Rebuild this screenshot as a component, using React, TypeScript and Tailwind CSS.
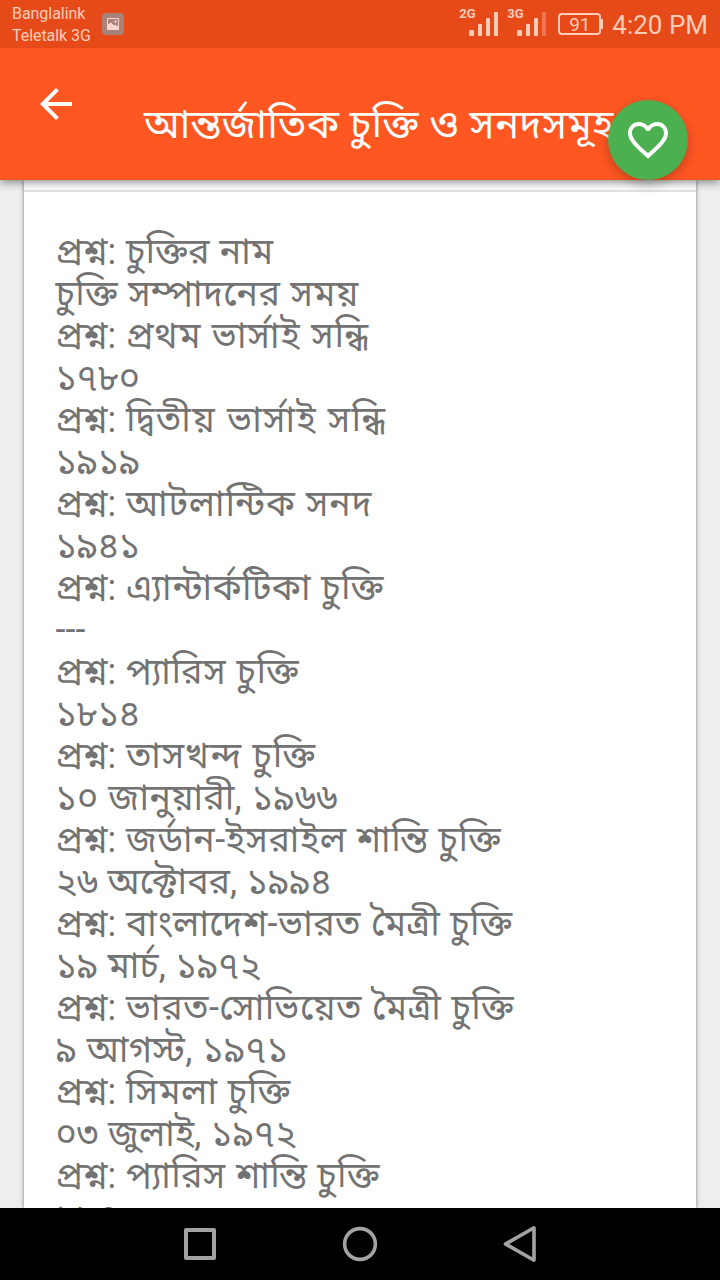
const lines = [
  { q: true, text: "চুক্তির নাম", tracking: "tracking-[0.2px]" },
  { text: "চুক্তি সম্পাদনের সময়", tracking: "tracking-[0.45px]" },
  { q: true, text: "প্রথম ভার্সাই সন্ধি", tracking: "tracking-[0.9px]" },
  { text: "১৭৮০", tracking: "tracking-[-0.2px]" },
  { q: true, text: "দ্বিতীয় ভার্সাই সন্ধি", tracking: "tracking-[1.3px]" },
  { text: "১৯১৯", tracking: "tracking-[-0.2px]" },
  { q: true, text: "আটলান্টিক সনদ", tracking: "tracking-[0.75px]" },
  { text: "১৯৪১", tracking: "tracking-[-0.2px]" },
  { q: true, text: "এ্যান্টার্কটিকা চুক্তি", tracking: "tracking-[0.5px]" },
  { text: "---", tracking: "tracking-normal" },
  { q: true, text: "প্যারিস চুক্তি", tracking: "tracking-[0.6px]" },
  { text: "১৮১৪", tracking: "tracking-[-0.2px]" },
  { q: true, text: "তাসখন্দ চুক্তি", tracking: "tracking-[0.85px]" },
  { text: "১০ জানুয়ারী, ১৯৬৬", tracking: "tracking-[0.2px]" },
  { q: true, text: "জর্ডান-ইসরাইল শান্তি চুক্তি", tracking: "tracking-[0.5px]" },
  { text: "২৬ অক্টোবর, ১৯৯৪", tracking: "tracking-[-0.05px]" },
  { q: true, text: "বাংলাদেশ-ভারত মৈত্রী চুক্তি", tracking: "tracking-[0.4px]" },
  { text: "১৯ মার্চ, ১৯৭২", tracking: "tracking-normal" },
  { q: true, text: "ভারত-সোভিয়েত মৈত্রী চুক্তি", tracking: "tracking-[0.45px]" },
  { text: "৯ আগস্ট, ১৯৭১", tracking: "tracking-[0.2px]" },
  { q: true, text: "সিমলা চুক্তি", tracking: "tracking-[0.6px]" },
  { text: "০৩ জুলাই, ১৯৭২", tracking: "tracking-[0.05px]" },
  { q: true, text: "প্যারিস শান্তি চুক্তি", tracking: "tracking-[0.4px]" },
  { text: "১৯৭৩", tracking: "tracking-[-0.2px]" },
];

function Signal({ label, weak }: { label: string; weak?: boolean }) {
  return (
    <div className="relative h-12 w-12">
      <span className="absolute left-0 top-[6px] text-[13px] leading-[15px] font-bold">{label}</span>
      <svg className="absolute left-[10px] top-3 h-6 w-[30px]" viewBox="0 0 30 24" fill="currentColor">
        <rect x="0" y="18" width="5" height="6" rx="1" />
        <rect x="9" y="12" width="4" height="12" rx="1" />
        <rect x="17" y="6" width="4" height="18" rx="1" />
        <rect x="25" y="0" width="4" height="24" rx="1" opacity={weak ? 0.35 : 1} />
      </svg>
    </div>
  );
}

function StatusBar() {
  return (
    <div className="relative z-20 flex h-12 shrink-0 items-center bg-[#e64a19] pl-3 pr-3 text-[#ffccb8]">
      <div className="pt-[2px] text-base leading-[22px] tracking-[-0.05px]">
        <div>Banglalink</div>
        <div>Teletalk 3G</div>
      </div>
      <div className="ml-[11px] flex size-[22px] items-center justify-center rounded bg-[#a98278]">
        <svg className="size-3" viewBox="0 0 12 12" fill="none" stroke="#f5d5cd">
          <rect x=".5" y=".5" width="11" height="11" />
          <path d="M1 7l3-2 3 3 1-1 3 2v2H1z" fill="#f5d5cd" />
          <circle cx="8.5" cy="3.5" r=".8" fill="#f5d5cd" />
        </svg>
      </div>
      <div className="ml-auto flex items-center">
        <Signal label="2G" />
        <Signal label="3G" weak />
        <div className="ml-[3px] flex h-[22px] w-[43px] items-center justify-center rounded border-2 border-current text-[19px] leading-none">
          91
        </div>
        <div className="h-[10px] w-[2px] bg-current" />
        <span className="ml-[9px] pt-[2px] text-[26px] leading-none whitespace-nowrap">4:20 PM</span>
      </div>
    </div>
  );
}

function Toolbar() {
  return (
    <header className="relative z-10 flex h-[132px] shrink-0 bg-[#ff5722] text-white shadow-[0_3px_8px_rgba(0,0,0,0.4)]">
      <svg className="ml-8 mt-8 size-12" viewBox="0 0 24 24" fill="currentColor">
        <path d="M20 11H7.83l5.59-5.59L12 4l-8 8 8 8 1.41-1.41L7.83 13H20v-2z" />
      </svg>
      <h1 className="ml-16 mt-[47px] text-[40px] leading-[60px] tracking-[0.4px] whitespace-nowrap">
        আন্তর্জাতিক চুক্তি ও সনদসমূহ
      </h1>
      <button className="absolute right-8 bottom-0 flex size-20 items-center justify-center rounded-full bg-[#4caf50] shadow-[0_4px_12px_rgba(0,0,0,0.25)]">
        <svg className="size-12" viewBox="0 0 24 24" fill="currentColor">
          <path d="M16.5 3c-1.74 0-3.41.81-4.5 2.09C10.91 3.81 9.24 3 7.5 3 4.42 3 2 5.42 2 8.5c0 3.78 3.4 6.86 8.55 11.54L12 21.35l1.45-1.32C18.6 15.36 22 12.28 22 8.5 22 5.42 19.58 3 16.5 3zm-4.4 15.55l-.1.1-.1-.1C7.14 14.24 4 11.39 4 8.5 4 6.5 5.5 5 7.5 5c1.54 0 3.04.99 3.57 2.36h1.87C13.46 5.99 14.96 5 16.5 5c2 0 3.5 1.5 3.5 3.5 0 2.89-3.14 5.74-7.9 10.05z" />
        </svg>
      </button>
    </header>
  );
}

function NavBar() {
  return (
    <nav className="relative z-10 flex h-[72px] shrink-0 items-center justify-center gap-[120px] bg-black text-[#a3a3a3]">
      <svg className="size-10" viewBox="0 0 40 40" fill="none" stroke="currentColor" strokeWidth="4" strokeLinejoin="round">
        <rect x="6" y="6" width="28" height="28" />
      </svg>
      <svg className="size-10" viewBox="0 0 40 40" fill="none" stroke="currentColor" strokeWidth="3.6">
        <circle cx="20" cy="20" r="15.4" />
      </svg>
      <svg className="size-10" viewBox="0 0 40 40" fill="none" stroke="currentColor" strokeWidth="3.6" strokeLinejoin="round">
        <path d="M34 3.8v32.4L5.5 20z" />
      </svg>
    </nav>
  );
}

export default function App() {
  return (
    <div className="flex h-screen flex-col overflow-hidden bg-[#eeeeee] font-[Roboto,'Noto_Sans_Bengali',sans-serif]">
      <StatusBar />
      <Toolbar />
      <main className="min-h-0 flex-1 overflow-hidden px-6">
        <div className="h-full bg-white shadow-[0_0_4px_rgba(0,0,0,0.5)]">
          <div className="h-3 border-b-2 border-[#e4dfe1]" />
          <div className="pl-[31.5px] pt-[39px] text-[36px] text-[#737373]">
            {lines.map((line, i) => (
              <p key={i} className="h-[42px] leading-[42px] whitespace-nowrap [word-spacing:0.7px]">
                {line.q && "প্রশ্ন: "}
                <span className={line.tracking}>{line.text}</span>
              </p>
            ))}
          </div>
        </div>
      </main>
      <NavBar />
    </div>
  );
}
